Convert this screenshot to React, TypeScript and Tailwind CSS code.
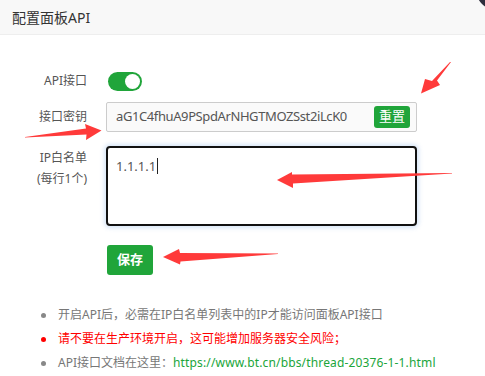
import React from "react";

const font = { fontFamily: '"Noto Sans", "Noto Sans CJK SC", sans-serif' };

function Arrows() {
  return (
    <svg
      className="absolute left-0 top-0 pointer-events-none"
      width={485}
      height={376}
      viewBox="0 0 485 376"
    >
      <g fill="#ff3a3a">
        {/* top-right arrow */}
        <polygon points="451,62 437,80.5 440,85 421,93.5 425,79 432,81 450,62" />
        {/* key arrow */}
        <polygon points="25,137 86,128.5 85,124 101.5,130.5 86,140 86.5,134.5 25,137.5" />
        {/* textarea arrow */}
        <polygon points="452,173 292,174.5 292,172 277,180 293,188 293,183.5 452,173.6" />
        {/* save arrow */}
        <polygon points="278,253.5 180,253 179,249 163,257 180,264.5 180.5,261.5 278,254" />
      </g>
    </svg>
  );
}

export default function App() {
  return (
    <div
      className="relative w-[485px] h-[376px] overflow-hidden bg-white"
      style={font}
    >
      {/* header */}
      <div className="h-[35px] bg-[#f8f8f8] border-b border-[#eeeeee] flex items-center pl-[12px] text-[14px] text-[#333]">
        配置面板API
      </div>
      {/* close button edge */}
      <div className="absolute left-[476px] top-[-31px] w-[41px] h-[41px] rounded-full bg-[#2e2d3c]" />

      <div className="flex flex-col">
        {/* toggle row */}
        <div className="flex items-center h-[30px] mt-[31px]">
          <div className="w-[87px] text-right text-[12px] text-[#555]">API接口</div>
          <div className="ml-[21px] w-[34px] h-[19px] rounded-full bg-[#20a53a] relative">
            <div className="absolute right-[2px] top-[2px] w-[15px] h-[15px] rounded-full bg-white" />
          </div>
        </div>

        {/* key row */}
        <div className="flex items-center mt-[6px]">
          <div className="w-[87px] text-right text-[12px] text-[#555]">接口密钥</div>
          <div className="ml-[19px] w-[311px] h-[30px] border border-[#cccccc] bg-[#fafafa] rounded-[2px] flex items-center justify-between pl-[9px] pr-[6px]">
            <span className="text-[13px] tracking-[-0.4px] text-[#555]">aG1C4fhuA9PSpdArNHGTMOZSst2iLcK0</span>
            <span className="h-[22px] w-[36px] rounded-[3px] bg-[#20a53a] text-white text-[13px] flex items-center justify-center">
              重置
            </span>
          </div>
        </div>

        {/* whitelist row */}
        <div className="flex mt-[14px]">
          <div className="w-[87px] text-right text-[12px] text-[#555] leading-[21px] pt-[1px]">
            <div>IP白名单</div>
            <div>(每行1个)</div>
          </div>
          <div className="ml-[19px] w-[311px] h-[80px] border-2 border-[#111] rounded-[4px] shadow-[0_0_4px_2px_rgba(120,170,230,0.3)] px-[8px] pt-[5px]">
            <span className="text-[13px] text-[#555]">1.1.1.1</span>
            <span className="inline-block w-[1px] h-[16px] bg-[#222] align-middle ml-[1px] -mt-[2px]" />
          </div>
        </div>

        {/* save */}
        <div className="flex mt-[19px]">
          <div className="ml-[107px] w-[46px] h-[30px] rounded-[3px] bg-[#20a53a] text-white text-[13px] font-bold flex items-center justify-center">
            保存
          </div>
        </div>

        {/* tips */}
        <ul className="mt-[28px] text-[12px] leading-[24px]">
          <li className="flex items-center">
            <span className="ml-[41px] w-[5px] h-[5px] rounded-full bg-[#888]" />
            <span className="ml-[12px] text-[#777]">开启API后，必需在IP白名单列表中的IP才能访问面板API接口</span>
          </li>
          <li className="flex items-center">
            <span className="ml-[41px] w-[5px] h-[5px] rounded-full bg-[#ff0000]" />
            <span className="ml-[12px] text-[#ff0000]">请不要在生产环境开启，这可能增加服务器安全风险；</span>
          </li>
          <li className="flex items-center">
            <span className="ml-[41px] w-[5px] h-[5px] rounded-full bg-[#888]" />
            <span className="ml-[12px] text-[#777]">
              API接口文档在这里：
              <span className="text-[#20a53a] tracking-[0.15px]">https://www.bt.cn/bbs/thread-20376-1-1.html</span>
            </span>
          </li>
        </ul>
      </div>

      <Arrows />
    </div>
  );
}
